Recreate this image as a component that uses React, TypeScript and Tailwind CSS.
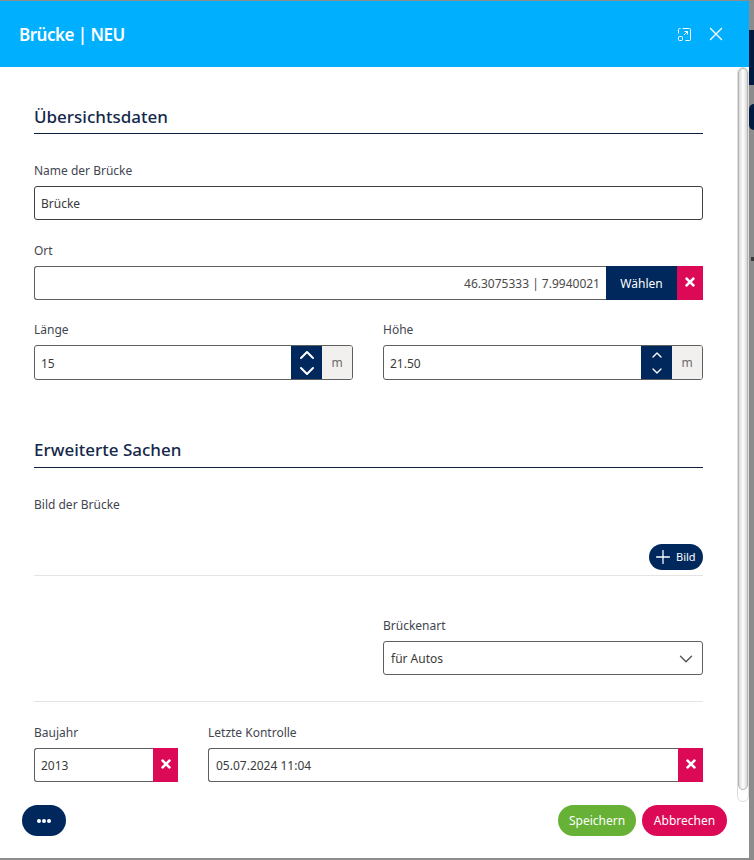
import { ChevronDown, ChevronUp, Plus, X } from 'lucide-react';
import { FaTimes } from 'react-icons/fa';

const ClearButton = ({ wide = false }: { wide?: boolean }) => (
  <div className={`${wide ? 'w-[26px]' : 'w-[25px]'} shrink-0 bg-[#dc0a56] flex items-center justify-center pb-[2px] text-white`}>
    <FaTimes size={14} />
  </div>
);

const NumberField = ({ value, big = false }: { value: string; big?: boolean }) => (
  <div className="flex h-[35px] rounded-[3px] border border-[#5f5f5f] overflow-hidden">
    <div className="flex-1 flex items-center pl-[6px] pt-[2px] text-[12px] text-[#3a3a3a]">{value}</div>
    <div className="w-[31px] bg-[#00285c] flex flex-col items-center justify-center text-white">
      <div className="h-[16px] flex items-center">
        <ChevronUp size={big ? 24 : 16} strokeWidth={2} />
      </div>
      <div className="h-[16px] flex items-center">
        <ChevronDown size={big ? 24 : 16} strokeWidth={2} />
      </div>
    </div>
    <div className="w-[30px] bg-[#f2f0ee] flex items-center justify-center text-[12px] text-[#6b6b6b]">m</div>
  </div>
);

const Label = ({ children }: { children: string }) => (
  <div className="h-[16px] text-[12px] leading-[18px] text-[#3f4650]">{children}</div>
);

export default function App() {
  return (
    <div className="relative w-[754px] h-[860px] overflow-hidden bg-[#8c8c8c] font-['Noto_Sans',sans-serif]">
      {/* page behind the dialog */}
      <div className="absolute right-0 top-[30px] w-[5px] h-[55px] bg-[#001a40]" />
      <div className="absolute right-0 top-[104px] w-[5px] h-[26px] rounded-l-full bg-[#001a40]" />
      <div className="absolute right-0 top-[257px] w-[3px] h-[4px] bg-[#3a3a3a]" />

      <div className="absolute left-0 top-[1px] w-[749px] h-[857px] bg-white flex flex-col">
        <div className="h-[66px] shrink-0 bg-[#00b0ff] flex items-center justify-between pl-[19px] pr-[22px]">
          <h1 className="pt-[1px] text-[17px] tracking-[-0.5px] font-semibold text-white">Brücke | NEU</h1>
          <div className="flex items-center gap-[13px] text-white">
            <svg width="15" height="15" viewBox="0 0 15 15" fill="none" stroke="currentColor" strokeWidth="1">
              <path d="M5.5 1.5h7a1 1 0 0 1 1 1v10a1 1 0 0 1-1 1h-4" />
              <path d="M1.5 6.5v-4a1 1 0 0 1 1-1h1" />
              <rect x="1.5" y="9.5" width="4" height="4" rx="1" />
              <path d="M7 8l3.5-3.5M7.5 4.5h3v3" />
            </svg>
            <X size={22} strokeWidth={1.5} />
          </div>
        </div>

        <div className="flex-1 pl-[34px] pr-[46px]">
          <h2 className="mt-[37px] pb-[4px] border-b border-[#0d1f3f] text-[17px] leading-[25px] font-medium text-[#14284b]">Übersichtsdaten</h2>

          <div className="mt-[28px]"><Label>Name der Brücke</Label></div>
          <div className="mt-[8px] h-[34px] rounded-[3px] border border-[#3f3f3f] flex items-center pl-[6px] pt-[1px] text-[12px] text-[#3a3a3a]">Brücke</div>

          <div className="mt-[22px]"><Label>Ort</Label></div>
          <div className="mt-[8px] flex h-[34px]">
            <div className="flex-1 rounded-l-[3px] border border-r-0 border-[#5f5f5f] flex items-center justify-end pr-[6px] pt-[1px] text-[12px] text-[#4a4a4a]">46.3075333 | 7.9940021</div>
            <div className="w-[71px] bg-[#00285c] flex items-center justify-center pt-[1px] text-[12px] text-white">Wählen</div>
            <ClearButton wide />
          </div>

          <div className="mt-[21px] grid grid-cols-[319px_320px] gap-[30px]">
            <div>
              <Label>Länge</Label>
              <div className="mt-[8px]"><NumberField value="15" big /></div>
            </div>
            <div>
              <Label>Höhe</Label>
              <div className="mt-[8px]"><NumberField value="21.50" /></div>
            </div>
          </div>

          <h2 className="mt-[57px] pb-[5px] border-b border-[#0d1f3f] text-[17px] leading-[25px] font-medium text-[#14284b]">Erweiterte Sachen</h2>

          <div className="mt-[28px]"><Label>Bild der Brücke</Label></div>
          <div className="mt-[32px] flex justify-end pb-[5px] border-b border-[#e4e4e4]">
            <div className="h-[26px] w-[54px] rounded-full bg-[#00285c] flex items-center pl-[3px] gap-[2px] text-[11px] text-white">
              <Plus size={22} strokeWidth={1.4} />
              <span>Bild</span>
            </div>
          </div>

          <div className="mt-[41px] grid grid-cols-[319px_320px] gap-[30px]">
            <div />
            <div>
              <Label>Brückenart</Label>
              <div className="mt-[8px] h-[34px] rounded-[3px] border border-[#5f5f5f] flex items-center justify-between pl-[7px] pr-[5px] pt-[1px] text-[12px] text-[#3a3a3a]">
                <span>für Autos</span>
                <ChevronDown size={22} strokeWidth={1.5} className="text-[#555555]" />
              </div>
            </div>
          </div>

          <div className="mt-[26px] border-t border-[#e4e4e4]" />

          <div className="mt-[22px] flex gap-[30px]">
            <div className="w-[144px]">
              <Label>Baujahr</Label>
              <div className="mt-[8px] flex h-[34px]">
                <div className="flex-1 rounded-l-[3px] border border-r-0 border-[#5f5f5f] flex items-center pl-[6px] pt-[1px] text-[12px] text-[#3a3a3a]">2013</div>
                <ClearButton />
              </div>
            </div>
            <div className="flex-1">
              <Label>Letzte Kontrolle</Label>
              <div className="mt-[8px] flex h-[34px]">
                <div className="flex-1 rounded-l-[3px] border border-r-0 border-[#5f5f5f] flex items-center pl-[7px] pt-[1px] text-[12px] text-[#3a3a3a]">05.07.2024 11:04</div>
                <ClearButton />
              </div>
            </div>
          </div>
        </div>

        <div className="flex items-center justify-between pl-[22px] pr-[22px] pb-[22px]">
          <div className="w-[44px] h-[31px] rounded-full bg-[#00285c] flex items-center justify-center gap-[1px]">
            <span className="w-[4px] h-[4px] rounded-full bg-white" />
            <span className="w-[4px] h-[4px] rounded-full bg-white" />
            <span className="w-[4px] h-[4px] rounded-full bg-white" />
          </div>
          <div className="flex gap-[6px]">
            <div className="w-[78px] h-[31px] rounded-full bg-[#67b236] flex items-center justify-center text-[12px] text-white">Speichern</div>
            <div className="w-[85px] h-[31px] rounded-full bg-[#dc0a56] flex items-center justify-center text-[12px] text-white">Abbrechen</div>
          </div>
        </div>

        {/* scrollbar */}
        <div className="absolute left-[737px] top-[66px] w-[12px] h-[735px] rounded-full border border-[#dddddd] bg-white">
          <div className="h-[722px] rounded-full border border-[#b5b5b5] bg-gradient-to-r from-[#d8d8d8] via-white to-[#d8d8d8]" />
        </div>
      </div>
    </div>
  );
}
